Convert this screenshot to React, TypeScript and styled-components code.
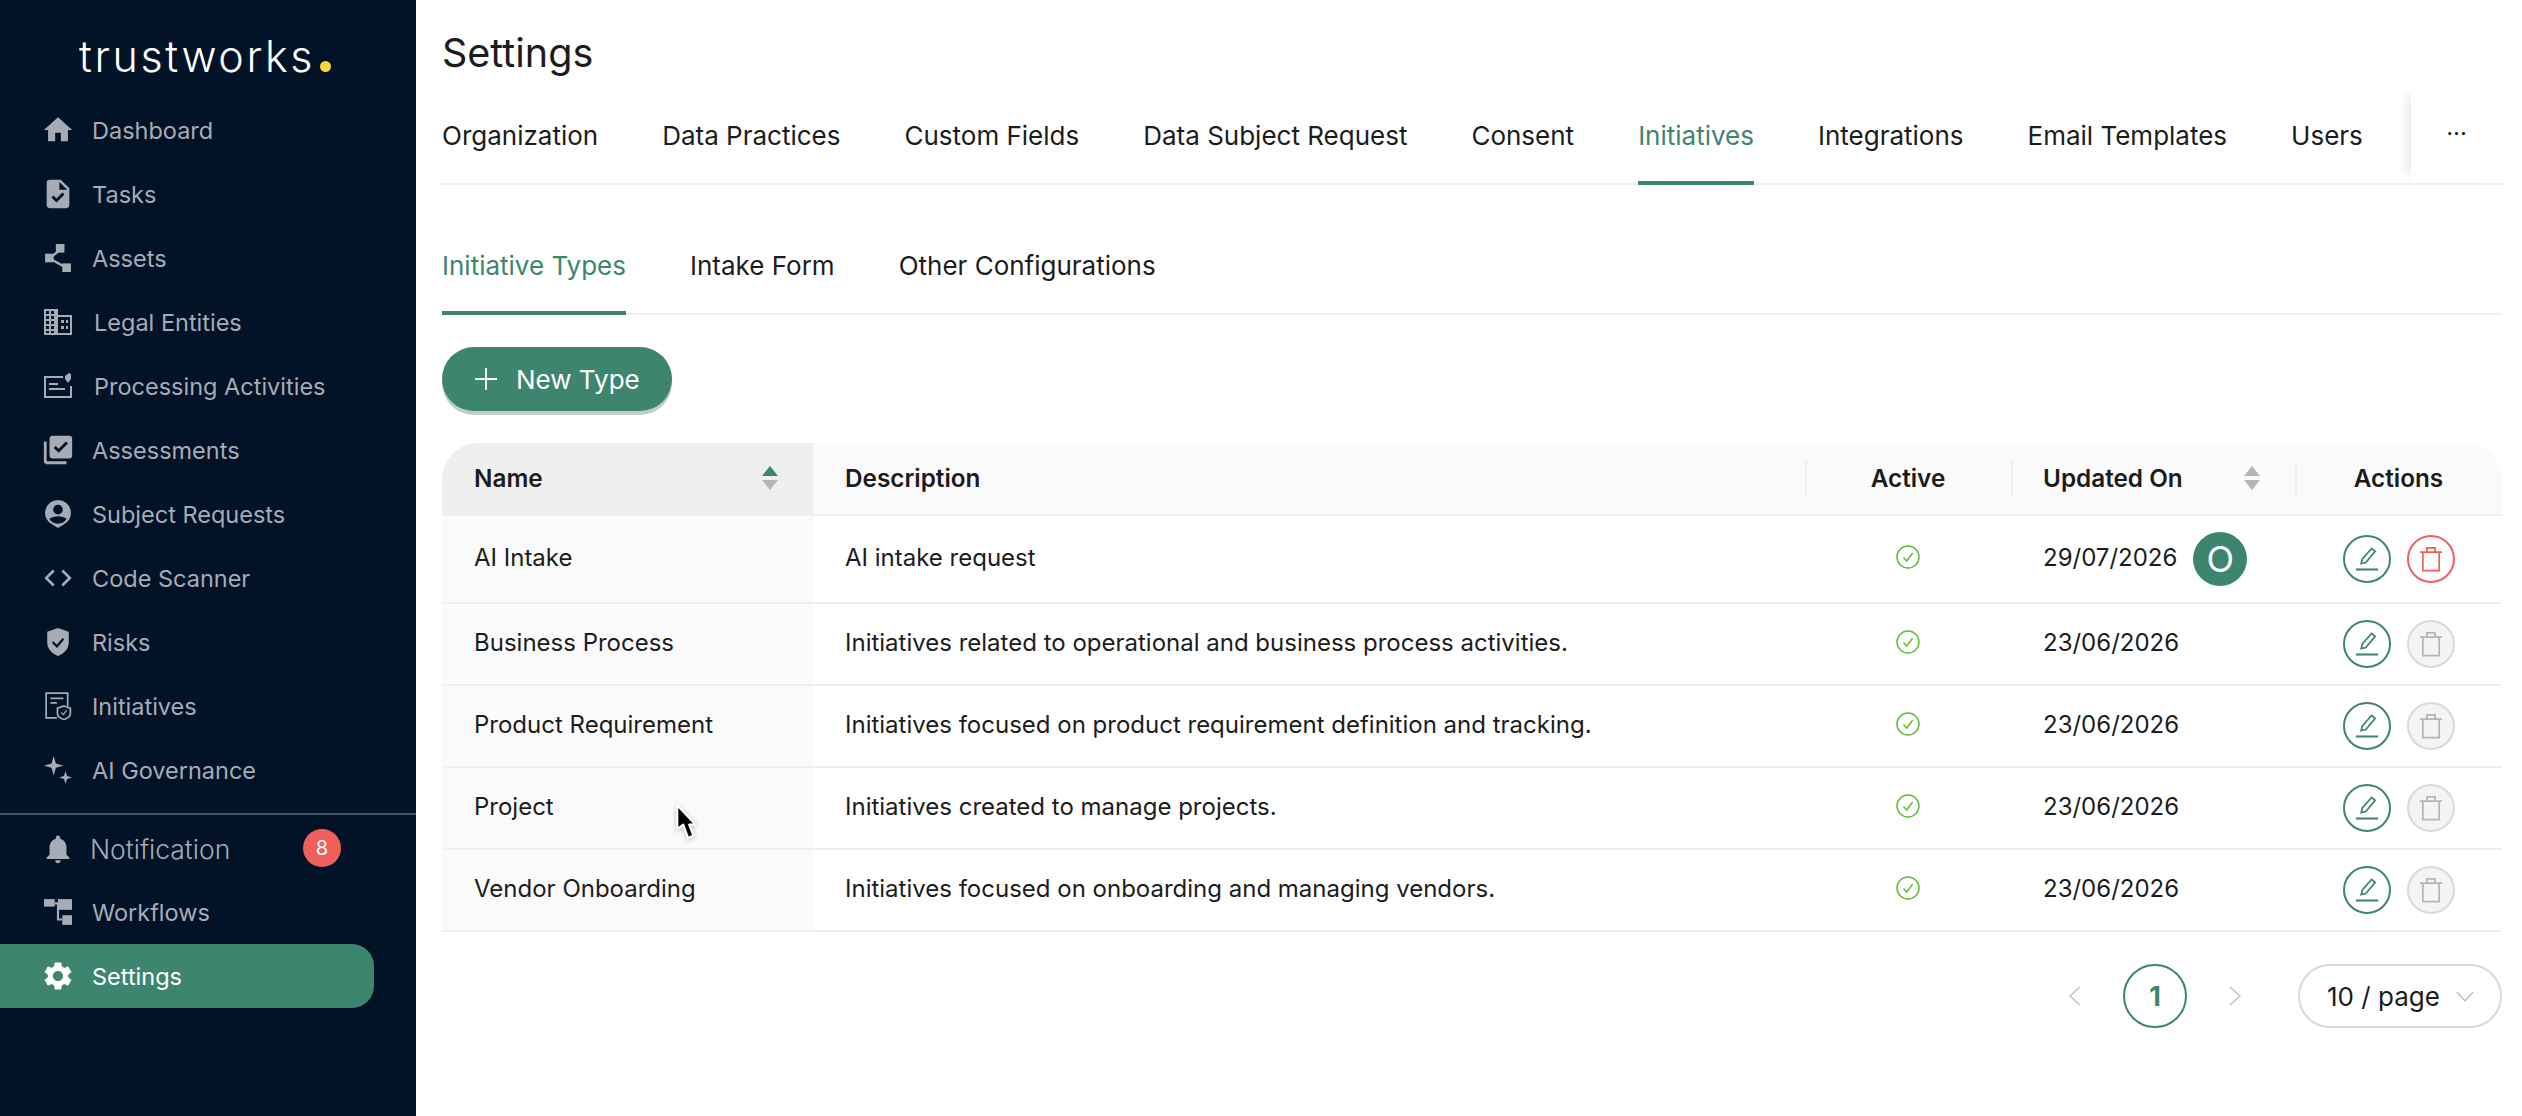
import React from "react";
import styled, { createGlobalStyle } from "styled-components";
import {
  MdHome,
  MdTask,
  MdLibraryAddCheck,
  MdNotifications,
  MdSettings,
} from "react-icons/md";

const GREEN = "#3e8570";
const INK = "#1c1c1c";
const LINE = "#efefef";

const GlobalStyle = createGlobalStyle`
  html, body {
    margin: 0;
    width: 2522px;
    height: 1116px;
    overflow: hidden;
    background: #fff;
  }
  * { box-sizing: border-box; }
  body { font-family: Inter, "Liberation Sans", sans-serif; color: ${INK}; }
`;

const ShareIcon = () => (
  <svg viewBox="0 0 26 26" fill="currentColor">
    <rect x="11" y="0" width="8" height="8" />
    <rect x="1" y="9" width="8" height="8" />
    <rect x="17" y="18" width="8" height="8" />
    <path d="M5 12 L15 4 L16 6 L6 14Z M5 12 L21 21 L20 23 L4 14Z" />
  </svg>
);

const BuildingIcon = () => (
  <svg viewBox="0 0 28 26" fill="currentColor">
    <path
      fillRule="evenodd"
      d="M0 0h14v6h14v20H0zM2 2v3h3V2zM7 2v3h3V2zM2 7v3h3V7zM7 7v3h3V7zM2 12v3h3v-3zM7 12v3h3v-3zM2 17v3h3v-3zM7 17v3h3v-3zM2 22v2h3v-2zM7 22v2h3v-2zM14 8v16h12V8zM17 11h3v3h-3zM22 11h2v3h-2zM17 17h3v3h-3zM22 17h2v3h-2z"
    />
  </svg>
);

const ActivitiesIcon = () => (
  <svg viewBox="0 0 28 26" fill="none" stroke="currentColor" strokeWidth="2">
    <path d="M19 4H1v20h26v-11" />
    <path d="M5 11h9M5 16h16" />
    <path d="M21 3l4-3 2 1v5l-3 4-3-4z" fill="currentColor" stroke="none" />
  </svg>
);

const PersonPinIcon = () => (
  <svg viewBox="0 0 26 26" fill="currentColor">
    <path d="M13 0a12 12 0 0 1 5 22.9L13 26l-5-3.100A12 12 0 0 1 13 0zm0 4.500a4.500 4.500 0 1 0 0 9 4.500 4.500 0 0 0 0-9zM5 17.500c1.500 3 4.500 4.500 8 4.500s6.500-1.500 8-4.500c-2-1.500-5-2.500-8-2.500s-6 1-8 2.500z" />
  </svg>
);

const CodeIcon = () => (
  <svg viewBox="0 0 26 26" fill="none" stroke="currentColor" strokeWidth="2.400">
    <path d="M9 6l-7 7 7 7M17 6l7 7-7 7" />
  </svg>
);

const ShieldIcon = () => (
  <svg viewBox="0 0 26 26">
    <path
      fill="currentColor"
      d="M13 0l10 3.500v10c0 6-4.500 10.500-10 12.500C7.500 24 3 19.500 3 13.500v-10z"
    />
    <path d="M8 13l4 4 6-7" fill="none" stroke="#021227" strokeWidth="2" />
  </svg>
);

const InitiativeIcon = () => (
  <svg viewBox="0 0 26 26" fill="none" stroke="currentColor" strokeWidth="1.600">
    <path d="M12 24H2V1h20v12" />
    <path d="M6 6h12M6 10h6" />
    <path d="M18.500 13l6 2v5c0 2.500-2.500 4.500-6 5.500-3.500-1-6-3-6-5.500v-5z" />
    <path d="M16 19l2 2 3-4" strokeWidth="1.200" />
  </svg>
);

const SparkleIcon = () => (
  <svg viewBox="0 0 26 26" fill="currentColor">
    <path d="M9 0l2 7 7 2-7 2-2 7-2-7-7-2 7-2z" />
    <path d="M20 14l1.400 4.600L26 20l-4.600 1.400L20 26l-1.400-4.600L14 20l4.600-1.400z" />
  </svg>
);

const WorkflowIcon = () => (
  <svg viewBox="0 0 26 26" fill="currentColor">
    <rect x="0" y="1" width="10" height="7" />
    <rect x="13" y="1" width="13" height="10" />
    <rect x="17" y="16" width="9" height="9" />
    <path d="M10 4h3v2h-3zM12 6h2v13h3v2h-5z" />
  </svg>
);

const EditIcon = () => (
  <svg viewBox="0 0 24 24" fill="none" stroke="currentColor" strokeWidth="1.500">
    <path d="M7 16l1-4 8-9 3 2.500-8 9.500z" />
    <path d="M2.500 21h19" strokeWidth="1.800" />
  </svg>
);

const TrashIcon = () => (
  <svg viewBox="0 0 24 24" fill="none" stroke="currentColor" strokeWidth="1.500">
    <path d="M2.500 6h19M8.500 6V2.500h7V6M5 6v16h14V6" />
  </svg>
);

const CheckCircleIcon = () => (
  <svg viewBox="0 0 24 24" fill="none" stroke="#66bb3c" strokeWidth="1.500">
    <circle cx="12" cy="12" r="11" />
    <path d="M7.500 12.500l3.200 3.500 6-8" />
  </svg>
);

const navTop = [
  { label: "Dashboard", icon: <MdHome />, large: true },
  { label: "Tasks", icon: <MdTask />, large: true },
  { label: "Assets", icon: <ShareIcon /> },
  { label: "Legal Entities", icon: <BuildingIcon />, wide: true },
  { label: "Processing Activities", icon: <ActivitiesIcon />, wide: true },
  { label: "Assessments", icon: <MdLibraryAddCheck />, large: true },
  { label: "Subject Requests", icon: <PersonPinIcon /> },
  { label: "Code Scanner", icon: <CodeIcon /> },
  { label: "Risks", icon: <ShieldIcon /> },
  { label: "Initiatives", icon: <InitiativeIcon /> },
  { label: "AI Governance", icon: <SparkleIcon /> },
];

const tabs = [
  "Organization",
  "Data Practices",
  "Custom Fields",
  "Data Subject Request",
  "Consent",
  "Initiatives",
  "Integrations",
  "Email Templates",
  "Users",
];

const subTabs = ["Initiative Types", "Intake Form", "Other Configurations"];

const rows = [
  { name: "AI Intake", description: "AI intake request", date: "29/07/2026", custom: true },
  {
    name: "Business Process",
    description: "Initiatives related to operational and business process activities.",
    date: "23/06/2026",
  },
  {
    name: "Product Requirement",
    description: "Initiatives focused on product requirement definition and tracking.",
    date: "23/06/2026",
  },
  { name: "Project", description: "Initiatives created to manage projects.", date: "23/06/2026" },
  {
    name: "Vendor Onboarding",
    description: "Initiatives focused on onboarding and managing vendors.",
    date: "23/06/2026",
  },
];

const App = () => {
  return (
    <>
      <GlobalStyle />
      <Page>
        <Sidebar>
          <Logo>
            trustworks<LogoDot />
          </Logo>
          <NavList>
            {navTop.map((item) => (
              <NavItem key={item.label} $wide={item.wide}>
                <NavIcon $large={item.large}>{item.icon}</NavIcon>
                {item.label}
              </NavItem>
            ))}
          </NavList>
          <SideDivider />
          <NotificationItem>
            <NavIcon $large>
              <MdNotifications />
            </NavIcon>
            Notification
            <Badge>8</Badge>
          </NotificationItem>
          <NavItem>
            <NavIcon>
              <WorkflowIcon />
            </NavIcon>
            Workflows
          </NavItem>
          <NavItem $active>
            <NavIcon $large>
              <MdSettings />
            </NavIcon>
            Settings
          </NavItem>
        </Sidebar>

        <Main>
          <Title>Settings</Title>
          <TopTabs>
            {tabs.map((tab) => (
              <Tab key={tab} $active={tab === "Initiatives"}>
                {tab}
              </Tab>
            ))}
            <MoreTab>···</MoreTab>
          </TopTabs>

          <SubTabs>
            {subTabs.map((tab) => (
              <Tab key={tab} $active={tab === "Initiative Types"}>
                {tab}
              </Tab>
            ))}
          </SubTabs>

          <NewButton>
            <svg viewBox="0 0 22 22" width="22" height="22" stroke="#fff" strokeWidth="1.800">
              <path d="M11 0v22M0 11h22" />
            </svg>
            New Type
          </NewButton>

          <Table>
            <HeadRow>
              <HeadCell $sorted>
                Name
                <SortArrows $active />
              </HeadCell>
              <HeadCell>Description</HeadCell>
              <HeadCell $center $divided>
                Active
              </HeadCell>
              <HeadCell $divided>
                Updated On
                <SortArrows />
              </HeadCell>
              <HeadCell $center $divided>
                Actions
              </HeadCell>
            </HeadRow>
            {rows.map((row) => (
              <BodyRow key={row.name}>
                <NameCell>{row.name}</NameCell>
                <Cell>{row.description}</Cell>
                <Cell $center>
                  <ActiveMark>
                    <CheckCircleIcon />
                  </ActiveMark>
                </Cell>
                <DateCell>
                  <DateText>{row.date}</DateText>
                  {row.custom && <Avatar>O</Avatar>}
                </DateCell>
                <ActionCell>
                  <RoundButton $tone="edit">
                    <EditIcon />
                  </RoundButton>
                  <RoundButton $tone={row.custom ? "delete" : "disabled"}>
                    <TrashIcon />
                  </RoundButton>
                </ActionCell>
              </BodyRow>
            ))}
          </Table>

          <Pagination>
            <PageArrow>
              <svg viewBox="0 0 14 22" fill="none" stroke="currentColor" strokeWidth="1.500">
                <path d="M12 2L2 11l10 9" />
              </svg>
            </PageArrow>
            <PageNumber>1</PageNumber>
            <PageArrow>
              <svg viewBox="0 0 14 22" fill="none" stroke="currentColor" strokeWidth="1.500">
                <path d="M2 2l10 9-10 9" />
              </svg>
            </PageArrow>
            <PageSize>
              10 / page
              <svg viewBox="0 0 20 14" width="18" height="13" fill="none" stroke="#bdbdbd" strokeWidth="1.500">
                <path d="M1 2l9 10 9-10" />
              </svg>
            </PageSize>
          </Pagination>
        </Main>

        <Cursor viewBox="0 0 22 37">
          <path
            d="M2 3v22l5.500-4 4.500 12.500 5-2.500-4-10h6z"
            fill="#000"
            stroke="#fff"
            strokeWidth="2"
            strokeLinejoin="round"
          />
        </Cursor>
      </Page>
    </>
  );
};

const Page = styled.div`
  display: flex;
  position: relative;
  width: 2522px;
  height: 1116px;
  overflow: hidden;
`;

const Sidebar = styled.aside`
  display: flex;
  flex-direction: column;
  flex: 0 0 416px;
  height: 100%;
  background-color: #021227;
  padding-top: 98px;
`;

const Logo = styled.div`
  position: absolute;
  top: 32px;
  left: 79px;
  display: flex;
  align-items: baseline;
  font-size: 43px;
  line-height: 48px;
  font-weight: 300;
  letter-spacing: 2.6px;
  color: #fff;
`;

const LogoDot = styled.span`
  width: 11px;
  height: 11px;
  margin-left: 5px;
  border-radius: 50%;
  background-color: #f9d443;
`;

const NavList = styled.nav`
  display: flex;
  flex-direction: column;
`;

const NavItem = styled.div<{ $wide?: boolean; $active?: boolean }>`
  display: flex;
  align-items: center;
  gap: ${(p) => (p.$wide ? "22px" : "20px")};
  width: 374px;
  height: 64px;
  padding-left: 44px;
  border-radius: ${(p) => (p.$active ? "0 22px 22px 0" : "0")};
  background-color: ${(p) => (p.$active ? GREEN : "transparent")};
  color: ${(p) => (p.$active ? "#fff" : "#a6acb6")};
  font-size: 23.5px;
`;

const NavIcon = styled.span<{ $large?: boolean }>`
  display: flex;
  align-items: center;
  justify-content: center;
  flex: 0 0 28px;
  width: 28px;
  height: 28px;

  svg {
    flex-shrink: 0;
    width: ${(p) => (p.$large ? "34px" : "100%")};
    height: ${(p) => (p.$large ? "34px" : "100%")};
  }
`;

const SideDivider = styled.div`
  height: 2px;
  margin-top: 11px;
  background-color: #47515f;
`;

const NotificationItem = styled(NavItem)`
  position: relative;
  height: 65px;
  padding-top: 2px;
  gap: 18px;
  font-size: 26.500px;
  font-weight: 300;
`;

const Badge = styled.span`
  position: absolute;
  top: 14px;
  left: 303px;
  display: flex;
  align-items: center;
  justify-content: center;
  width: 38px;
  height: 38px;
  border-radius: 50%;
  background-color: #f0605a;
  color: #fff;
  font-size: 20px;
  font-weight: 400;
`;

const Main = styled.main`
  display: flex;
  flex-direction: column;
  flex: 1;
  min-width: 0;
  padding: 0 20px 0 26px;
`;

const Title = styled.h1`
  height: 86px;
  margin: 0;
  padding-top: 29px;
  font-size: 39.500px;
  line-height: 48px;
  font-weight: 400;
`;

const TopTabs = styled.div`
  display: flex;
  gap: 64px;
  position: relative;
  height: 99px;
  border-bottom: 2px solid ${LINE};
`;

const Tab = styled.div<{ $active?: boolean }>`
  display: flex;
  align-items: center;
  height: calc(100% + 2px);
  padding-top: 4px;
  font-size: 26px;
  white-space: nowrap;
  color: ${(p) => (p.$active ? GREEN : INK)};
  border-bottom: 4px solid ${(p) => (p.$active ? GREEN : "transparent")};
`;

const MoreTab = styled.div`
  position: absolute;
  top: 0;
  right: 0;
  display: flex;
  align-items: center;
  justify-content: center;
  width: 91px;
  height: 97px;
  padding-bottom: 2px;
  font-size: 24px;
  background: #fff;
  box-shadow: -12px 0 10px -8px rgba(0, 0, 0, 0.09);
`;

const SubTabs = styled.div`
  display: flex;
  gap: 64px;
  height: 130px;
  padding-top: 31px;
  border-bottom: 2px solid ${LINE};
`;

const NewButton = styled.button`
  display: flex;
  align-items: center;
  gap: 19px;
  align-self: flex-start;
  height: 64px;
  margin-top: 32px;
  padding: 0 32px 0 33px;
  border: none;
  border-radius: 32px;
  background-color: ${GREEN};
  box-shadow: 0 4px 0 rgba(62, 100, 85, 0.32);
  color: #fff;
  font-family: inherit;
  font-size: 26px;
`;

const Table = styled.div`
  margin-top: 32px;
  display: flex;
  flex-direction: column;
`;

const COLUMNS = "371px 992px 206px 284px 207px";

const HeadRow = styled.div`
  display: grid;
  grid-template-columns: ${COLUMNS};
  height: 73px;
  background-color: #fafafa;
  border-radius: 36px 36px 0 0;
  overflow: hidden;
`;

const HeadCell = styled.div<{ $sorted?: boolean; $center?: boolean; $divided?: boolean }>`
  position: relative;
  display: flex;
  align-items: center;
  justify-content: ${(p) => (p.$center ? "center" : "space-between")};
  padding: 0 32px 2px;
  font-size: 24.300px;
  font-weight: 600;
  background-color: ${(p) => (p.$sorted ? "#efefef" : "transparent")};
  border-bottom: 2px solid ${(p) => (p.$sorted ? "#efefef" : LINE)};

  &::before {
    content: "";
    display: ${(p) => (p.$divided ? "block" : "none")};
    position: absolute;
    left: 0;
    top: 18px;
    bottom: 18px;
    width: 2px;
    background-color: #f0f0f0;
  }
`;

const SortArrows = styled.span<{ $active?: boolean }>`
  display: flex;
  flex-direction: column;
  gap: 4px;
  margin-right: 3px;

  &::before,
  &::after {
    content: "";
    width: 0;
    height: 0;
    border-left: 8px solid transparent;
    border-right: 8px solid transparent;
  }

  &::before {
    border-bottom: 10px solid ${(p) => (p.$active ? GREEN : "#b5b5b5")};
  }

  &::after {
    border-top: 10px solid #b5b5b5;
  }
`;

const BodyRow = styled.div`
  display: grid;
  grid-template-columns: ${COLUMNS};
  border-bottom: 2px solid ${LINE};
`;

const Cell = styled.div<{ $center?: boolean }>`
  display: flex;
  align-items: center;
  justify-content: ${(p) => (p.$center ? "center" : "flex-start")};
  padding: 14px 32px 18px;
  font-size: 24px;
`;

const NameCell = styled(Cell)`
  background-color: #fafafa;
`;

const DateCell = styled(Cell)`
  gap: 16px;
  padding: 16px 0 16px 32px;
`;

const DateText = styled.span`
  margin-bottom: 3px;
`;

const ActionCell = styled(Cell)`
  gap: 16px;
  padding: 16px 0 16px 48px;
`;

const ActiveMark = styled.span`
  display: flex;
  width: 24px;
  height: 24px;
`;

const Avatar = styled.span`
  display: flex;
  align-items: center;
  justify-content: center;
  width: 54px;
  height: 54px;
  border-radius: 50%;
  background-color: ${GREEN};
  color: #fff;
  font-size: 36px;
`;

const TONES = {
  edit: { color: GREEN, border: GREEN, background: "#fff" },
  delete: { color: "#f0605a", border: "#f0605a", background: "#fff" },
  disabled: { color: "#b5b5b5", border: "#d9d9d9", background: "#f4f4f4" },
};

const RoundButton = styled.span<{ $tone: keyof typeof TONES }>`
  display: flex;
  align-items: center;
  justify-content: center;
  width: 48px;
  height: 48px;
  border-radius: 50%;
  border: 2px solid ${(p) => TONES[p.$tone].border};
  background-color: ${(p) => TONES[p.$tone].background};
  color: ${(p) => TONES[p.$tone].color};

  svg {
    width: 28px;
    height: 28px;
  }
`;

const Pagination = styled.div`
  display: flex;
  align-items: center;
  justify-content: flex-end;
  margin-top: 32px;
`;

const PageArrow = styled.span`
  display: flex;
  width: 14px;
  height: 22px;
  color: #c4c4c4;
`;

const PageNumber = styled.span`
  display: flex;
  align-items: center;
  justify-content: center;
  width: 64px;
  height: 64px;
  margin: 0 41px;
  border-radius: 50%;
  border: 2px solid ${GREEN};
  color: ${GREEN};
  font-size: 27px;
  font-weight: 700;
`;

const PageSize = styled.div`
  display: flex;
  align-items: center;
  justify-content: space-between;
  width: 204px;
  height: 64px;
  margin-left: 56px;
  padding: 0 26px 0 27px;
  border: 2px solid #d9d9d9;
  border-radius: 32px;
  font-size: 26px;
`;

const Cursor = styled.svg`
  position: absolute;
  left: 675px;
  top: 802px;
  width: 24px;
  height: 40px;
  filter: drop-shadow(0 1px 2px rgba(0, 0, 0, 0.25));
`;

export default App;
